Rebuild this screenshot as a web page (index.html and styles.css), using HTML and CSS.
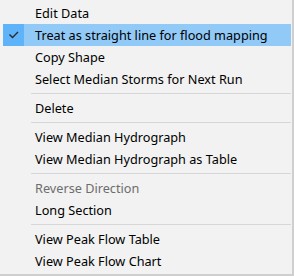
FILE: index.html
```
<!DOCTYPE html>
<html>
<head>
<meta charset="utf-8">
<link rel="stylesheet" href="styles.css">
</head>
<body>
<div class="menu">
  <div class="item"><span class="check"></span><span class="label">Edit Data</span></div>
  <div class="item hot"><span class="check"><svg width="21" height="22" viewBox="0 0 21 22"><polyline points="6.5,10.5 9.5,13.5 15,8" fill="none" stroke="#2b2b2b" stroke-width="1.4"/></svg></span><span class="label">Treat as straight line for flood mapping</span></div>
  <div class="item"><span class="check"></span><span class="label">Copy Shape</span></div>
  <div class="item"><span class="check"></span><span class="label">Select Median Storms for Next Run</span></div>
  <div class="sep"></div>
  <div class="item"><span class="check"></span><span class="label">Delete</span></div>
  <div class="sep"></div>
  <div class="item"><span class="check"></span><span class="label">View Median Hydrograph</span></div>
  <div class="item"><span class="check"></span><span class="label">View Median Hydrograph as Table</span></div>
  <div class="sep"></div>
  <div class="item disabled"><span class="check"></span><span class="label">Reverse Direction</span></div>
  <div class="item"><span class="check"></span><span class="label">Long Section</span></div>
  <div class="sep"></div>
  <div class="item"><span class="check"></span><span class="label">View Peak Flow Table</span></div>
  <div class="item"><span class="check"></span><span class="label">View Peak Flow Chart</span></div>
</div>
</body>
</html>
```
FILE: styles.css
```
html, body {
  margin: 0;
  padding: 0;
  background: #f2f2f2;
}
.menu {
  width: 294px;
  height: 276px;
  box-sizing: border-box;
  background: #f2f2f2;
  border-right: 2px solid #cfcfcf;
  border-bottom: 2px solid #cfcfcf;
  padding: 2px 1px 2px 3px;
  font-family: "Noto Sans", "Open Sans", sans-serif;
  font-size: 12.7px;
  color: #000;
}
.item {
  display: flex;
  height: 22px;
  align-items: center;
}
.check {
  width: 21px;
  height: 22px;
  flex: none;
}
.check svg {
  display: block;
}
.label {
  margin-left: 11px;
  white-space: nowrap;
}
.hot {
  background: #91c9f7;
}
.hot .check {
  background: #5eb3f9;
}
.disabled {
  color: #6d6d6d;
}
.sep {
  height: 7px;
  display: flex;
  flex-direction: column;
  justify-content: center;
  padding-left: 28px;
}
.sep::before {
  content: "";
  display: block;
  height: 1px;
  background: #d7d7d7;
}
```
